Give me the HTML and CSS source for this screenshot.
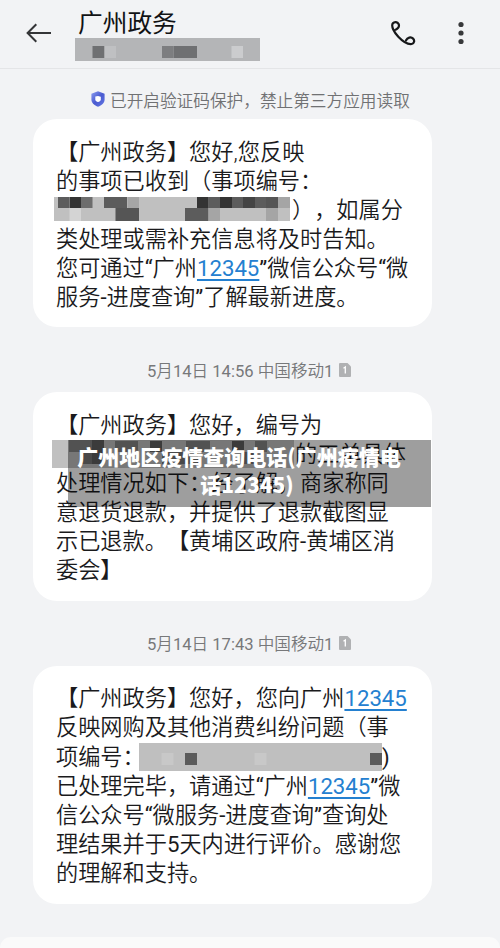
FILE: index.html
```html
<!DOCTYPE html>
<html lang="zh-CN">
<head>
<meta charset="utf-8">
<title>广州政务</title>
<link rel="stylesheet" href="styles.css">
</head>
<body>
<div class="screen">
  <header class="header">
    <svg class="back" width="26" height="22" viewBox="0 0 26 22"><path d="M25 11H2M10.300 2.300 1.600 11l8.700 8.700" fill="none" stroke="#343537" stroke-width="2"/></svg>
    <div class="contact">
      <h1 class="name">广州政务</h1>
      <svg class="number" width="185" height="23" viewBox="0 0 185 23"><path fill="#b4b5b7" d="M0 0h185v23H0z"/><path fill="#6f7072" d="M17.500 8h12v12h-12zM98.500 8H122v12H98.500z"/><path fill="#bfc0c2" d="M29.500 8H41v12H29.500z"/><path fill="#7d7e80" d="M87 8h11.500v12H87z"/><path fill="#cbccce" d="M156.500 8H168v12h-11.500z"/></svg>
    </div>
    <svg class="call" width="26" height="26" viewBox="0 0 26 26"><path d="M5.600 9.700C8.100 8.700 9.700 6.500 8.600 4 7.500 1.700 4.400 1.400 2.900 3.300 0.700 6.200 4.200 12.300 8.300 16.700c4.300 4.500 9.500 8 13.400 7.300 2.600-.5 3.200-3.600 1.400-5.400-2.200-2.200-5.800-1.100-7 1.700" fill="none" stroke="#17181a" stroke-width="2.200" stroke-linecap="round"/></svg>
    <svg class="more" width="6" height="24" viewBox="0 0 6 24"><g fill="#37383a"><circle cx="3" cy="3.500" r="2.600"/><circle cx="3" cy="12" r="2.600"/><circle cx="3" cy="20.500" r="2.600"/></g></svg>
  </header>

  <main class="thread">
    <div class="notice">
      <svg width="14" height="16" viewBox="0 0 14 16"><defs><linearGradient id="sh" x1="0" y1="0" x2="1" y2="1"><stop offset="0" stop-color="#8b9cf0"/><stop offset=".5" stop-color="#4a5bd0"/><stop offset="1" stop-color="#6478e4"/></linearGradient></defs><path fill="url(#sh)" d="M7 .3 13.600 2.700v5.800c0 3.400-3 5.900-6.600 7.200C3.400 14.400.4 11.900.4 8.500V2.700z"/><path fill="#fff" d="M4.300 5.600 7 4.900l2.800.8v2.700c0 1.300-1.200 2.100-2.800 2.700-1.600-.6-2.700-1.400-2.700-2.700z"/></svg>
      <span>已开启验证码保护，禁止第三方应用读取</span>
    </div>

    <section class="bubble first">
      <p>【广州政务】您好,您反映</p>
      <p>的事项已收到（事项编号：</p>
      <p><svg class="mask mask-a" width="236" height="24" viewBox="0 0 236 24"><path fill="#c0c0c0" d="M0 0h236v24H0z"/><path fill="#5c5c5c" d="M4 0h11v11H4zM50 0h23v11H50zM154.500 0H166v11h-11.500zM178 0h11v11h-11zM201 0h11v11h-11zM131 11h23.500v13H131z"/><path fill="#333" d="M15.500 0H27v11H15.500zM143 0h11.500v11H143zM166 0h12v11h-12z"/><path fill="#6d6d6d" d="M27 0h11.500v11H27z"/><path fill="#a5a5a5" d="M73.500 0H85v11H73.500zM224 0h12v11h-12zM154.500 11H166v13h-11.500zM212 11h12v13h-12z"/><path fill="#555" d="M61.500 11H85v13H61.500zM212 0h12v11h-12z"/><path fill="#444" d="M189 0h12v11h-12z"/><path fill="#d4d4d4" d="M15.500 11H27v13H15.500z"/></svg>），如属分</p>
      <p>类处理或需补充信息将及时告知。</p>
      <p>您可通过<b>“</b>广州<a>12345</a><b>”</b>微信公众号<b>“</b>微</p>
      <p>服务<b>-</b>进度查询<b>”</b>了解最新进度。</p>
    </section>

    <div class="stamp"><span><b>5</b>月<b>14</b>日<b> 14:56 </b>中国移动<b>1</b></span><svg width="12" height="14" viewBox="0 0 12 14"><path fill="#b0b1b3" d="M1 0h7.500L12 3.500V13a1 1 0 0 1-1 1H1a1 1 0 0 1-1-1V1a1 1 0 0 1 1-1z"/><path d="M4.500 5.200 6.300 4v6.500" fill="none" stroke="#fff" stroke-width="1.300"/></svg></div>

    <section class="bubble">
      <p>【广州政务】您好，编号为</p>
      <p><svg class="mask mask-b" width="242" height="28" viewBox="0 0 242 28"><path fill="#c0c0c0" d="M0 0h242v28H0z"/><path fill="#858585" d="M17 0h23v12H17zM63 1h23v11H63zM134 1h24v11h-24zM203 1h12v11h-12z"/><path fill="#606060" d="M40 0h12v24H40zM98 1h12v11H98zM180 1h12v11h-12z"/><path fill="#767676" d="M29 12h11v12H29zM110 12h36v12h-36zM192 12h11v12h-11z"/></svg>的工单具体</p>
      <p>处理情况如下：经了解，商家称同</p>
      <p>意退货退款，并提供了退款截图显</p>
      <p>示已退款。【黄埔区政府<b>-</b>黄埔区消</p>
      <p>委会】</p>
      <div class="caption"><div class="top">广州地区疫情查询电话(广州疫情电</div><div>话12345)</div></div>
    </section>

    <div class="stamp"><span><b>5</b>月<b>14</b>日<b> 17:43 </b>中国移动<b>1</b></span><svg width="12" height="14" viewBox="0 0 12 14"><path fill="#b0b1b3" d="M1 0h7.500L12 3.500V13a1 1 0 0 1-1 1H1a1 1 0 0 1-1-1V1a1 1 0 0 1 1-1z"/><path d="M4.500 5.200 6.300 4v6.500" fill="none" stroke="#fff" stroke-width="1.300"/></svg></div>

    <section class="bubble">
      <p>【广州政务】您好，您向广州<a>12345</a></p>
      <p>反映网购及其他消费纠纷问题（事</p>
      <p><span class="label">项编号：</span><svg class="mask mask-c" width="243" height="28" viewBox="0 0 243 28"><path fill="#bfbfbf" d="M0 0h243v28H0z"/><path fill="#5b5b5b" d="M46 10h12v12H46zM231 10h12v12h-12z"/><path fill="#c8c8c8" d="M22.500 10h12v12h-12zM115.500 10h12v12h-12z"/></svg><b>)</b></p>
      <p>已处理完毕，请通过<b>“</b>广州<a>12345</a><b>”</b>微</p>
      <p>信公众号<b>“</b>微服务<b>-</b>进度查询<b>”</b>查询处</p>
      <p>理结果并于<b>5</b>天内进行评价。感谢您</p>
      <p>的理解和支持。</p>
    </section>
  </main>
  <footer class="composer"></footer>
</div>
</body>
</html>
```
FILE: styles.css
```css
* { box-sizing: border-box; }
body {
  margin: 0;
  background: #f2f3f5;
  font-family: Roboto, "Noto Sans CJK SC", sans-serif;
  text-spacing-trim: space-all;
}
/* Latin runs keep the regular weight beside the lighter Chinese text */
b, .bubble a { font-weight: 400; }
.screen {
  width: 500px;
  height: 948px;
  overflow: hidden;
  display: flex;
  flex-direction: column;
}
.header {
  flex: none;
  height: 69px;
  border-bottom: 1px solid #e4e5e7;
  display: flex;
  align-items: flex-start;
}
.back { margin: 22px 0 0 26px; }
.contact { width: 185px; margin-left: 23px; }
.name {
  margin: 5px 0 0 3px;
  height: 33px;
  font-size: 24.700px;
  line-height: 37px;
  font-weight: 400;
  color: #111214;
}
.number { display: block; }
.call { margin: 20px 0 0 130px; }
.more { margin: 21px 0 0 42px; }
.thread { flex: 1; min-height: 0; }
.notice {
  height: 50px;
  padding: 12px 0 0 91px;
  display: flex;
  align-items: center;
  gap: 5px;
  color: #707173;
  font-size: 16.670px;
  font-weight: 350;
  white-space: nowrap;
}
.notice svg { margin-top: -3px; }
.bubble {
  position: relative;
  width: 399px;
  margin-left: 33px;
  padding: 18.400px 0 15.100px 23px;
  border-radius: 24px;
  background: #fff;
  color: #1a1a1c;
  font-size: 22.200px;
  font-weight: 350;
}
.bubble.first { padding: 18.500px 0 14.500px 23px; }
.bubble p {
  margin: 0;
  height: 29.200px;
  line-height: 29.200px;
  display: flex;
  white-space: pre;
}
.bubble a {
  color: #2480d0;
  text-decoration: underline;
  text-decoration-thickness: 1.500px;
  text-underline-offset: 3px;
}
.mask { flex: none; }
.mask-a { margin: 1px 2px 0 -2px; }
.mask-b { margin: 0 1px 0 -4px; }
.mask-c { margin: 0; }
.label { width: 83px; }
.stamp {
  height: 65px;
  padding: 20px 0 0 147px;
  display: flex;
  align-items: center;
  gap: 6px;
  color: #77787a;
  font-size: 16.600px;
  font-weight: 350;
  white-space: pre;
}
.caption {
  position: absolute;
  left: 35px;
  top: 48px;
  width: 363px;
  height: 67px;
  padding: 2px 5px 0 0;
  background: rgba(0, 0, 0, .38);
  color: #fff;
  font-size: 21px;
  font-weight: 900;
  line-height: 28px;
  text-align: center;
  white-space: nowrap;
  font-family: "Noto Sans CJK SC", sans-serif;
}
.caption .top { margin-left: -16px; }
.composer {
  flex: none;
  height: 11px;
  border-radius: 24px 24px 0 0;
  background: #fafafa;
}
```
